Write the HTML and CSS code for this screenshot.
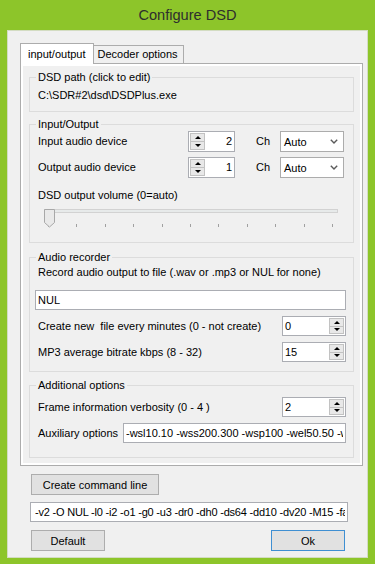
FILE: index.html
```html
<!DOCTYPE html>
<html lang="en">
<head>
  <meta charset="UTF-8" />
  <title>Configure DSD</title>
  <link rel="stylesheet" href="styles.css">
</head>
<body>
  <div class="window">
    <div class="titlebar">Configure DSD</div>

    <div class="client">
      <!-- tab control -->
      <div class="tabs">
        <div class="tab-strip">
          <div class="tab active">input/output</div>
          <div class="tab">Decoder options</div>
        </div>

        <div class="tab-body">
          <div class="tab-page">

            <fieldset class="group g-path">
              <legend>DSD path (click to edit)</legend>
              <div class="label">C:\SDR#2\dsd\DSDPlus.exe</div>
            </fieldset>

            <fieldset class="group g-io">
              <legend>Input/Output</legend>
              <div class="row row-io">
                <div class="label io-label">Input audio device</div>
                <div class="spin spin-left">
                  <span class="spin-btns"><span class="spin-up"></span><span class="spin-down"></span></span>
                  <span class="spin-value">2</span>
                </div>
                <div class="ch">Ch</div>
                <div class="combo">
                  <span>Auto</span>
                  <svg width="8" height="5" viewBox="0 0 8 5"><polyline points="0.8,0.8 4,4 7.2,0.8" fill="none" stroke="#5a5a5a" stroke-width="1.4"/></svg>
                </div>
              </div>
              <div class="row row-io second">
                <div class="label io-label">Output audio device</div>
                <div class="spin spin-left">
                  <span class="spin-btns"><span class="spin-up"></span><span class="spin-down"></span></span>
                  <span class="spin-value">1</span>
                </div>
                <div class="ch">Ch</div>
                <div class="combo">
                  <span>Auto</span>
                  <svg width="8" height="5" viewBox="0 0 8 5"><polyline points="0.8,0.8 4,4 7.2,0.8" fill="none" stroke="#5a5a5a" stroke-width="1.4"/></svg>
                </div>
              </div>
              <div class="label vol-label">DSD output volume (0=auto)</div>
              <div class="slider">
                <svg class="thumb" width="11" height="19" viewBox="0 0 11 19">
                  <polygon points="0.5,0.5 10.5,0.5 10.5,13.5 5.5,18 0.5,13.5" fill="#e9e9e9" stroke="#a8a8a8"/>
                </svg>
                <div class="track"></div>
                <div class="ticks">
                  <i></i><i></i><i></i><i></i><i></i><i></i><i></i><i></i><i></i><i></i><i></i>
                </div>
              </div>
            </fieldset>

            <fieldset class="group g-rec">
              <legend>Audio recorder</legend>
              <div class="label rec-label">Record audio output to file (.wav or .mp3 or NUL for none)</div>
              <input class="text-input nul-input" type="text" value="NUL">
              <div class="row first-spin">
                <div class="label grow">Create new&nbsp; file every minutes (0 - not create)</div>
                <div class="spin spin-right">
                  <span class="spin-value">0</span>
                  <span class="spin-btns"><span class="spin-up"></span><span class="spin-down"></span></span>
                </div>
              </div>
              <div class="row next-spin">
                <div class="label grow">MP3 average bitrate kbps (8 - 32)</div>
                <div class="spin spin-right">
                  <span class="spin-value">15</span>
                  <span class="spin-btns"><span class="spin-up"></span><span class="spin-down"></span></span>
                </div>
              </div>
            </fieldset>

            <fieldset class="group g-add">
              <legend>Additional options</legend>
              <div class="row first-spin">
                <div class="label grow">Frame information verbosity (0 - 4 )</div>
                <div class="spin spin-right">
                  <span class="spin-value">2</span>
                  <span class="spin-btns"><span class="spin-up"></span><span class="spin-down"></span></span>
                </div>
              </div>
              <div class="row aux-row">
                <div class="label aux-label">Auxiliary options</div>
                <input class="text-input aux-input" type="text" value="-wsl10.10 -wss200.300 -wsp100 -wel50.50 -wer50.50">
              </div>
            </fieldset>

          </div>
        </div>
      </div>

      <!-- bottom buttons -->
      <button class="btn btn-cmd">Create command line</button>
      <input class="text-input cmd-input" type="text" value="-v2 -O NUL -l0 -i2 -o1 -g0 -u3 -dr0 -dh0 -ds64 -dd10 -dv20 -M15 -fa">
      <div class="btn-row">
        <button class="btn">Default</button>
        <button class="btn btn-default">Ok</button>
      </div>
    </div>
  </div>
</body>
</html>
```

FILE: styles.css
```css
* {
  box-sizing: border-box;
}

body {
  margin: 0;
  width: 375px;
  height: 564px;
  overflow: hidden;
  background-color: #8dc52a;
  font-family: 'Liberation Sans', Arial, sans-serif;
  font-size: 11px;
  color: #000;
}

.window {
  height: 564px;
  padding: 0 7px 6px 7px;
  display: flex;
  flex-direction: column;
}

.titlebar {
  height: 30px;
  line-height: 30px;
  text-align: center;
  font-size: 14.6px;
  color: #2e2e2e;
}

.client {
  flex: 1;
  background: #f0f0f0;
  border: 1px solid #d3dcc2;
  display: flex;
  flex-direction: column;
}

/* tab control */
.tabs {
  width: 343px;
  margin: 12px 0 0 12px;
}

.tab-strip {
  position: relative;
  z-index: 1;
  display: flex;
  align-items: flex-end;
  height: 20px;
}

.tab {
  height: 18px;
  line-height: 17px;
  padding: 0 5px 0 4px;
  background: #f0f0f0;
  border: 1px solid #acacac;
  border-left: none;
  border-bottom: none;
}

.tab.active {
  height: 21px;
  line-height: 20px;
  margin-bottom: -1px;
  padding: 0 7px;
  background: #fff;
  border-left: 1px solid #acacac;
}

.tab-body {
  height: 403px;
  border: 1px solid #acacac;
  background: #fff;
  padding: 2px;
}

.tab-page {
  height: 100%;
  background: #f0f0f0;
  padding: 5px 6px 0 6px;
}

/* group boxes */
.group {
  margin: 0;
  padding: 0 7px 0 5px;
  border: 1px solid #dcdcdc;
  min-width: 0;
}

.group legend {
  padding: 0 2px;
  margin-left: 1px;
  line-height: 13px;
}

.label {
  line-height: 13px;
  padding-left: 3px;
  white-space: nowrap;
}

.g-path {
  padding-top: 5px;
  padding-bottom: 9px;
}

.g-io {
  margin-top: 6px;
  padding-bottom: 7px;
}

.g-rec {
  margin-top: 8px;
  padding-bottom: 9px;
}

.g-add {
  margin-top: 7px;
  padding-bottom: 14px;
}

.row {
  display: flex;
  align-items: center;
}

.grow {
  flex: 1;
}

.row-io {
  height: 21px;
}

.row-io.second {
  margin-top: 5px;
}

.io-label {
  width: 153px;
}

.ch {
  width: 24px;
  margin-left: 21px;
  line-height: 13px;
}

.vol-label {
  margin-top: 11px;
}

.rec-label {
  margin-top: 2px;
}

.first-spin {
  margin-top: 5px;
}

.g-rec .first-spin {
  margin-top: 6px;
}

.next-spin {
  margin-top: 6px;
}

.aux-row {
  margin-top: 6px;
}

.aux-label {
  width: 88px;
}

/* spinners */
.spin {
  display: flex;
  background: #fff;
  border: 1px solid #abadb3;
}

.spin-left {
  width: 47px;
  height: 21px;
}

.spin-right {
  width: 64px;
  height: 20px;
}

.spin-value {
  flex: 1;
  line-height: 18px;
}

.spin-left .spin-value {
  text-align: right;
  padding-right: 2px;
}

.spin-right .spin-value {
  padding-left: 2px;
}

.spin-btns {
  width: 15px;
  margin: 1px;
  display: flex;
  flex-direction: column;
}

.spin-up,
.spin-down {
  flex: 1;
  display: flex;
  align-items: center;
  justify-content: center;
  background: #e8e8e8;
  border: 1px solid #c2c2c2;
}

.spin-down {
  border-top: none;
}

.spin-up::before {
  content: "";
  border-left: 3px solid transparent;
  border-right: 3px solid transparent;
  border-bottom: 3px solid #000;
}

.spin-down::before {
  content: "";
  border-left: 3px solid transparent;
  border-right: 3px solid transparent;
  border-top: 3px solid #000;
}

.combo {
  width: 64px;
  height: 21px;
  display: flex;
  align-items: center;
  justify-content: space-between;
  padding: 0 5px 0 3px;
  background: #fff;
  border: 1px solid #acacac;
}

/* slider */
.slider {
  position: relative;
  height: 26px;
  margin-top: 3px;
  padding: 0 8px 0 9px;
}

.thumb {
  position: absolute;
  left: 9px;
  top: 0;
}

.track {
  height: 4px;
  margin-top: 7px;
  background: #e7eaea;
  border: 1px solid #d2d2d2;
}

.ticks {
  display: flex;
  justify-content: space-between;
  margin: 11px 5px 0 4px;
  height: 3px;
}

.ticks i {
  width: 1px;
  height: 3px;
  background: #a0a0a0;
}

/* text boxes */
.text-input {
  display: block;
  height: 20px;
  margin: 0;
  padding: 0 2px;
  border: 1px solid #abadb3;
  background: #fff;
  font-family: 'Liberation Sans', Arial, sans-serif;
  font-size: 11px;
  color: #000;
  outline: none;
}

.nul-input {
  width: 100%;
  margin-top: 11px;
}

.aux-input {
  flex: 1;
  min-width: 0;
}

.cmd-input {
  width: 318px;
  margin: 7px 0 0 22px;
  padding-left: 4px;
  letter-spacing: -0.2px;
}

/* buttons */
.btn {
  height: 21px;
  width: 74px;
  padding: 0;
  background: #e1e1e1;
  border: 1px solid #adadad;
  font-family: 'Liberation Sans', Arial, sans-serif;
  font-size: 11px;
  color: #000;
}

.btn-cmd {
  width: 128px;
  margin: 8px 0 0 23px;
}

.btn-row {
  display: flex;
  justify-content: space-between;
  width: 314px;
  margin: 8px 0 0 23px;
}

.btn-default {
  border-color: #3f8fd2;
}
```
